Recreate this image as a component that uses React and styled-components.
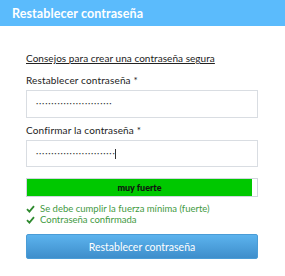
import React from "react"
import styled, { createGlobalStyle } from "styled-components"

const GlobalStyle = createGlobalStyle`
	html, body {
		margin: 0;
		padding: 0;
		background: #ffffff;
	}
	body {
		font-family: Lato, "Liberation Sans", sans-serif;
	}
`

const Page = styled.div`
	width: 285px;
	height: 276px;
	display: flex;
	flex-direction: column;
	overflow: hidden;
`

const Header = styled.div`
	height: 26px;
	background: #5bbbfc;
	display: flex;
	align-items: center;
	padding-left: 12px;
	color: #ffffff;
	font-size: 12.5px;
	font-weight: 700;
	letter-spacing: 0.1px;
`

const Body = styled.div`
	padding: 25px 27px 0 26px;
	display: flex;
	flex-direction: column;
`

const TipsLink = styled.a`
	font-size: 10px;
	color: #222;
	text-decoration: underline;
	letter-spacing: 0.05px;
	line-height: 14px;
	margin-bottom: 9px;
`

const Label = styled.label`
	font-size: 10px;
	color: #222;
	letter-spacing: 0.15px;
	line-height: 13px;
	margin-bottom: 3px;
`

const Input = styled.div`
	height: ${props => props.h}px;
	border: 1px solid #d9dde2;
	display: flex;
	align-items: center;
	padding-left: 9px;
	margin-bottom: ${props => props.gap}px;
`

const Dots = styled.span`
	font-family: "Open Sans", sans-serif;
	font-size: 6px;
	letter-spacing: 0.8px;
	color: #333;
	line-height: 1;
`

const Caret = styled.span`
	display: inline-block;
	width: 1px;
	height: 10px;
	background: #333;
`

const Meter = styled.div`
	height: 17px;
	border: 1px solid #d0d6de;
	display: flex;
	margin-bottom: 6px;
`

const MeterFill = styled.div`
	background: #00c800;
	display: flex;
	align-items: center;
	justify-content: center;
	font-size: 9px;
	font-weight: 900;
	color: #111;
	letter-spacing: 0;
`

const Checks = styled.div`
	display: flex;
	flex-direction: column;
	margin-bottom: 9px;
`

const CheckRow = styled.div`
	display: flex;
	align-items: center;
	gap: 5px;
	font-size: 9.5px;
	color: #3f9a3f;
	line-height: 11px;
`

const SubmitButton = styled.button`
	height: 25px;
	border: 1px solid #4a9cd6;
	border-radius: 2px;
	background: linear-gradient(#5cb3ee, #3e8ecb);
	color: #ffffff;
	font-family: Lato, "Liberation Sans", sans-serif;
	font-size: 10.5px;
	padding: 0;
`

function Check() {
	return (
		<svg width="9" height="8" viewBox="0 0 9 8">
			<path d="M1 4.2 L3.4 6.6 L8 1.2" stroke="#2f8a2f" strokeWidth="1.8" fill="none" />
		</svg>
	)
}

function App() {
	const strength = 97.8

	return (
		<Page>
			<GlobalStyle />
			<Header>Restablecer contraseña</Header>
			<Body>
				<TipsLink href="#">Consejos para crear una contraseña segura</TipsLink>
				<Label>Restablecer contraseña *</Label>
				<Input h={26} gap={6}>
					<Dots>{"•".repeat(25)}</Dots>
				</Input>
				<Label>Confirmar la contraseña *</Label>
				<Input h={25} gap={11}>
					<Dots>{"•".repeat(26)}</Dots>
					<Caret />
				</Input>
				<Meter>
					<MeterFill style={{ width: strength + "%" }}>muy fuerte</MeterFill>
				</Meter>
				<Checks>
					<CheckRow><Check />Se debe cumplir la fuerza mínima (fuerte)</CheckRow>
					<CheckRow><Check />Contraseña confirmada</CheckRow>
				</Checks>
				<SubmitButton>Restablecer contraseña</SubmitButton>
			</Body>
		</Page>
	)
}

export default App
